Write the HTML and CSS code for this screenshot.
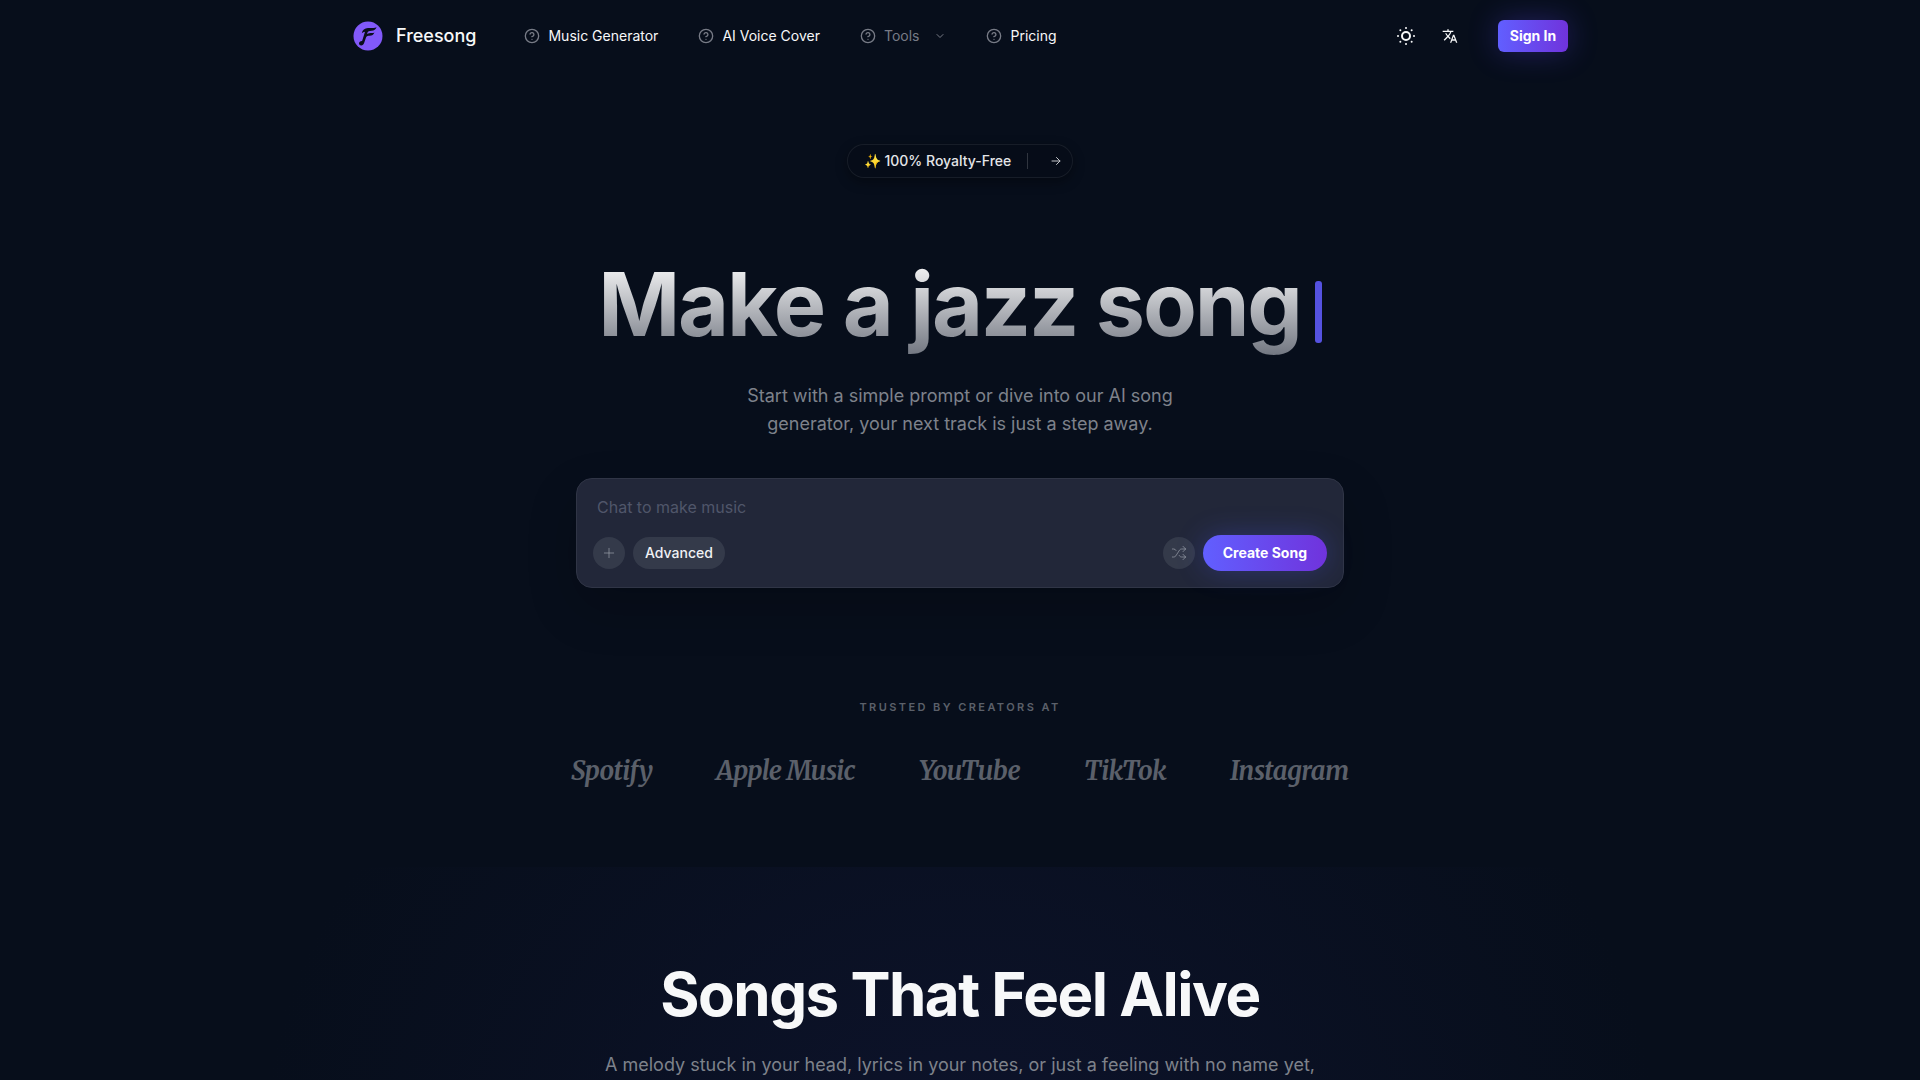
FILE: index.html
```html
<!DOCTYPE html>
<html lang="en">
<head>
<meta charset="utf-8">
<meta name="viewport" content="width=device-width, initial-scale=1">
<title>Freesong</title>
<link rel="stylesheet" href="styles.css">
</head>
<body>
<svg class="sprite" aria-hidden="true">
  <symbol id="help" viewBox="0 0 24 24"><circle cx="12" cy="12" r="10"/><path d="M9.09 9a3 3 0 0 1 5.83 1c0 2-3 3-3 3M12 17h.01"/></symbol>
</svg>
<header class="header">
  <div class="header-inner">
    <a class="brand" href="#">
      <svg class="logo" viewBox="0 0 30 30" aria-hidden="true"><circle cx="15" cy="15" r="14.5" fill="#8259f9"/><path d="M23.6 6.200c-1 2.500-2.400 3.300-5 3.500-2.700.2-3.700.5-4.300 2.400l-.3 1c1.500-.8 3-.9 5-1 .9 0 1.700-.2 2.400-.6-.9 2.300-2.300 3.200-4.700 3.300-1.800.1-2.900.4-3.600 1.400l-1.800 5.300c-.6 1.900-1.700 3-3.200 3-1.300 0-2.100-.8-2.100-1.900 0-1.500 1.400-2.600 3.100-2.500l2.900-9.400c-1.300.1-2.300.6-3.200 1.500.6-3.300 2.800-5.100 6.200-5.200 3.600 0 6.100.1 8.600-.8z" fill="#0a0d1c"/></svg>
      <span>Freesong</span>
    </a>
    <nav class="nav">
      <a class="nav-link" href="#"><svg class="icon"><use href="#help"/></svg>Music Generator</a>
      <a class="nav-link" href="#"><svg class="icon"><use href="#help"/></svg>AI Voice Cover</a>
      <button class="nav-link nav-menu" type="button"><svg class="icon"><use href="#help"/></svg>Tools<svg class="chevron" viewBox="0 0 24 24"><path d="m6 9 6 6 6-6"/></svg></button>
      <a class="nav-link" href="#"><svg class="icon"><use href="#help"/></svg>Pricing</a>
    </nav>
    <div class="actions">
      <button class="icon-button" type="button" aria-label="Theme"><svg class="sun" viewBox="0 0 24 24"><circle cx="12" cy="12" r="4"/><path d="M12 4h.01M20 12h.01M12 20h.01M4 12h.01M17.657 6.343h.01M17.657 17.657h.01M6.343 17.657h.01M6.343 6.343h.01"/></svg></button>
      <button class="icon-button" type="button" aria-label="Language"><svg class="translate" viewBox="0 0 24 24"><path d="m12.870 15.070-2.540-2.510.03-.03A17.520 17.520 0 0 0 14.070 6H17V4h-7V2H8v2H1v1.990h11.170C11.500 7.920 10.440 9.750 9 11.350 8.070 10.320 7.300 9.190 6.690 8h-2c.73 1.630 1.730 3.170 2.980 4.560l-5.090 5.020L4 19l5-5 3.110 3.110.76-2.040zM18.500 10h-2L12 22h2l1.120-3h4.750L21 22h2l-4.500-12zm-2.620 7 1.620-4.330L19.120 17h-3.240z"/></svg></button>
      <button class="sign-in" type="button">Sign In</button>
    </div>
  </div>
</header>
<main>
  <section class="hero">
    <a class="badge" href="#"><span>✨ 100% Royalty-Free</span><i class="divider"></i><svg class="arrow" viewBox="0 0 24 24"><path d="M4 12h16M13 5l7 7-7 7"/></svg></a>
    <h1 class="title"><span class="title-text">Make a jazz song</span><i class="caret"></i></h1>
    <p class="lead hero-lead">Start with a simple prompt or dive into our AI song generator, your next track is just a step away.</p>
    <form class="prompt">
      <input class="prompt-input" type="text" placeholder="Chat to make music" aria-label="Chat to make music">
      <div class="prompt-bar">
        <button class="round" type="button" aria-label="Add"><svg class="icon" viewBox="0 0 24 24"><path d="M5 12h14M12 5v14"/></svg></button>
        <button class="advanced" type="button">Advanced</button>
        <button class="round shuffle" type="button" aria-label="Random prompt"><svg class="icon" viewBox="0 0 24 24"><path d="m18 14 4 4-4 4M18 2l4 4-4 4M2 18h1.970a4 4 0 0 0 3.300-1.700l5.460-8.600a4 4 0 0 1 3.300-1.700H22M2 6h1.970a4 4 0 0 1 3.600 2.200M22 18h-6.040a4 4 0 0 1-3.300-1.800l-.36-.45"/></svg></button>
        <button class="create" type="button">Create Song</button>
      </div>
    </form>
    <p class="trusted">Trusted by creators at</p>
    <ul class="brands"><li>Spotify</li><li>Apple Music</li><li>YouTube</li><li>TikTok</li><li>Instagram</li></ul>
  </section>
  <section class="showcase">
    <h2 class="section-title">Songs That Feel Alive</h2>
    <p class="lead">A melody stuck in your head, lyrics in your notes, or just a feeling with no name yet,</p>
  </section>
</main>
</body>
</html>
```
FILE: styles.css
```css
* { box-sizing: border-box; }
html { overflow-x: hidden; scrollbar-width: none; }
body {
  margin: 0;
  background: #070e1b;
  color: #f7f8f9;
  font-family: Inter, "Liberation Sans", sans-serif;
  font-size: 14px;
  line-height: 20px;
}
button, input { font: inherit; color: inherit; border: 0; padding: 0; background: none; }
a { color: inherit; text-decoration: none; }
h1, h2, p, ul { margin: 0; padding: 0; }
svg { fill: none; stroke: currentColor; stroke-width: 2; stroke-linecap: round; stroke-linejoin: round; flex: none; }
.sprite { position: absolute; width: 0; height: 0; }
.icon { width: 16px; height: 16px; }

.header-inner {
  display: flex;
  align-items: center;
  max-width: 1280px;
  height: 72px;
  margin: 0 auto;
  padding: 0 32px;
}
.brand { display: flex; align-items: center; gap: 13px; padding-left: 1px; font-size: 18px; font-weight: 500; }
.logo { width: 30px; height: 30px; stroke: none; }
.nav { display: flex; gap: 40px; margin-left: 48px; }
.nav-link { display: flex; align-items: center; gap: 8px; }
.nav-link .icon, .nav-menu { color: #777b86; }
.chevron { width: 12px; height: 12px; margin-left: 7px; }
.actions { display: flex; align-items: center; gap: 8px; margin-left: auto; }
.icon-button { display: flex; align-items: center; justify-content: center; width: 36px; height: 36px; }
.sun { width: 24px; height: 24px; }
.translate { width: 16px; height: 16px; fill: currentColor; stroke: none; }
.sign-in, .create {
  background: linear-gradient(90deg, #615fff, #7033dc);
  color: #fff;
  font-weight: 700;
}
.sign-in { width: 70px; height: 32px; margin-left: 22px; border-radius: 6px; box-shadow: 0 0 30px rgba(97, 70, 255, .3); }

.hero { display: flex; flex-direction: column; align-items: center; padding: 72px 24px 78px; }
.badge {
  display: flex;
  align-items: center;
  height: 34px;
  padding: 0 10px 0 16px;
  border: 1px solid rgba(255, 255, 255, .07);
  border-radius: 17px;
  background: #060c18;
  box-shadow: 0 4px 12px rgba(0, 0, 0, .35);
  font-weight: 500;
  color: #e4e5e8;
}
.divider { width: 1px; height: 16px; margin: 0 22px 0 16px; background: #30353f; }
.arrow { width: 12px; height: 12px; color: #c4c6ca; }
.title {
  display: flex;
  align-items: center;
  margin-top: 78px;
  font-size: 88px;
  line-height: 96px;
  font-weight: 700;
  letter-spacing: -0.025em;
}
.title-text {
  padding-bottom: 8px;
  background: linear-gradient(180deg, #fff, #6b707b);
  -webkit-background-clip: text;
  background-clip: text;
  color: transparent;
}
.caret { width: 7px; height: 62px; margin: 8px 0 0 14px; border-radius: 3px; background: #5552e0; }
.lead { font-size: 18px; line-height: 28px; color: #7e828b; text-align: center; }
.hero-lead { max-width: 448px; margin-top: 22px; }
.prompt {
  width: 100%;
  max-width: 768px;
  margin-top: 40px;
  padding: 16px;
  border: 1px solid #303546;
  border-radius: 16px;
  background: #222739;
  box-shadow: 0 20px 50px rgba(0, 0, 0, .2);
}
.prompt-input { display: block; width: 100%; height: 24px; padding: 0 4px; font-size: 16px; outline: 0; }
.prompt-input::placeholder { color: #50566a; opacity: 1; }
.prompt-bar { display: flex; align-items: center; gap: 8px; margin-top: 16px; }
.round, .advanced { height: 32px; border-radius: 16px; background: #343a4a; }
.round { display: flex; align-items: center; justify-content: center; width: 32px; color: #a2a6b0; }
.round svg { stroke-width: 1; }
.advanced { padding: 0 12px; font-weight: 500; color: #f0f1f4; }
.shuffle { margin-left: auto; }
.create { height: 36px; padding: 0 20px; border-radius: 18px; box-shadow: 0 0 28px rgba(80, 90, 255, .28); }
.trusted { margin-top: 108px; font-size: 11px; line-height: 22px; font-weight: 600; letter-spacing: 0.22em; text-transform: uppercase; color: #5b606a; }
.brands {
  display: flex;
  gap: 64px;
  margin-top: 35px;
  list-style: none;
  font-family: Merriweather, "Noto Serif", "DejaVu Serif", serif;
  font-size: 26px;
  line-height: 36px;
  font-weight: 700;
  font-style: italic;
  letter-spacing: -0.025em;
  color: #5b606a;
}

.showcase {
  display: flex;
  flex-direction: column;
  align-items: center;
  min-height: 600px;
  padding: 97px 24px;
  background: radial-gradient(ellipse 700px 600px at 50% 300px, #0d132b, #070e1b);
}
.section-title { font-size: 60px; line-height: 60px; font-weight: 700; letter-spacing: -0.025em; }
.showcase .lead { margin-top: 27px; }
```
